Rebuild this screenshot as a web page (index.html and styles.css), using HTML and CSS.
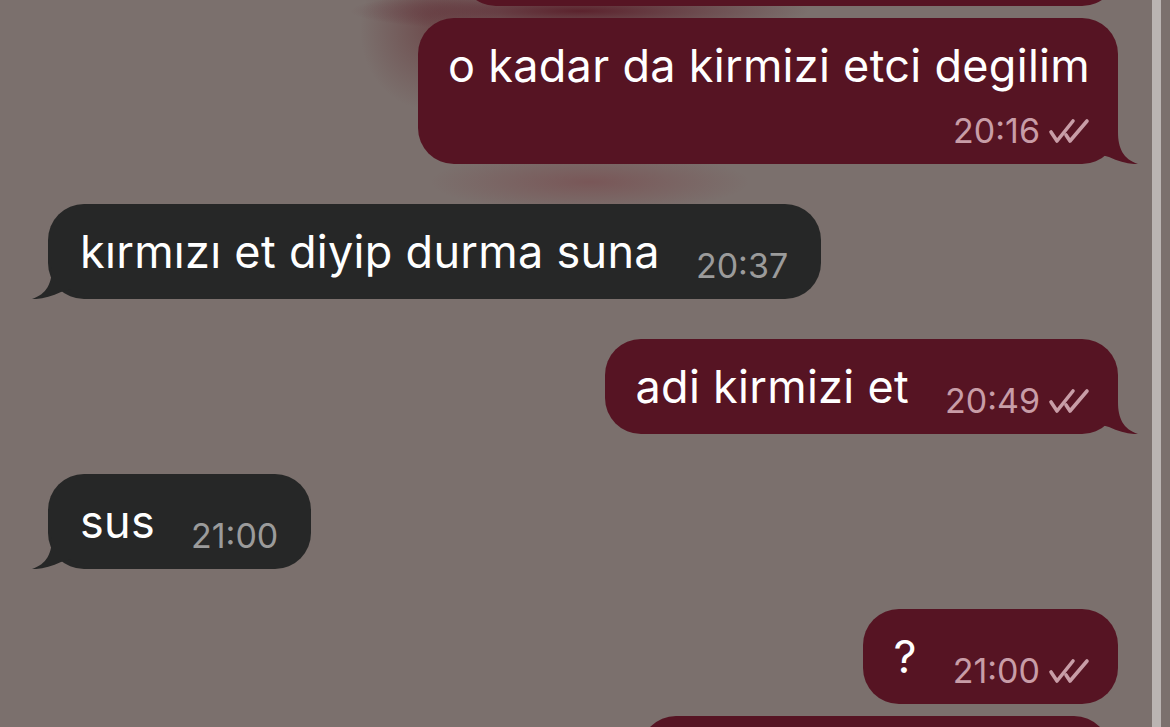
FILE: index.html
```html
<!DOCTYPE html>
<html lang="tr">
<head>
<meta charset="utf-8">
<title>Sohbet</title>
<link rel="stylesheet" href="styles.css">
</head>
<body>
<svg width="0" height="0" class="defs" aria-hidden="true">
  <defs>
    <symbol id="tail" viewBox="0 0 40 36">
      <path d="M0 0 H20 V4 C20 20 25 31 40 36 C31 36.5 21 33.5 11 29 L0 26 Z"/>
    </symbol>
    <symbol id="ticks" viewBox="0 0 42 26">
      <path d="M3 14 L9 23 L25 3" />
      <path d="M18 17 L22 23 L39 3" />
    </symbol>
  </defs>
</svg>

<div class="screen">
  <main class="chat">
    <div class="row out">
      <div class="bubble sent clipped"></div>
    </div>

    <div class="row out grouped">
      <div class="bubble sent stacked">
        <span class="text">o kadar da kirmizi etci degilim</span>
        <span class="meta">20:16<svg class="ticks"><use href="#ticks"/></svg></span>
        <svg class="tail"><use href="#tail"/></svg>
      </div>
    </div>

    <div class="row in">
      <div class="bubble received">
        <span class="text">kırmızı et diyip durma suna</span>
        <span class="meta">20:37</span>
        <svg class="tail"><use href="#tail"/></svg>
      </div>
    </div>

    <div class="row out">
      <div class="bubble sent">
        <span class="text">adi kirmizi et</span>
        <span class="meta">20:49<svg class="ticks"><use href="#ticks"/></svg></span>
        <svg class="tail"><use href="#tail"/></svg>
      </div>
    </div>

    <div class="row in">
      <div class="bubble received">
        <span class="text">sus</span>
        <span class="meta">21:00</span>
        <svg class="tail"><use href="#tail"/></svg>
      </div>
    </div>

    <div class="row out">
      <div class="bubble sent">
        <span class="text">?</span>
        <span class="meta">21:00<svg class="ticks"><use href="#ticks"/></svg></span>
      </div>
    </div>

    <div class="row out grouped">
      <div class="bubble sent next"></div>
    </div>
  </main>
  <div class="scroll-track"></div>
  <div class="edge"></div>
</div>
</body>
</html>
```

FILE: styles.css
```css
* { box-sizing: border-box; }

html, body {
  margin: 0;
  height: 100%;
}

body {
  overflow: hidden;
  font-family: Inter, "Noto Sans", "DejaVu Sans", sans-serif;
  background-color: #7b706d;
  /* soft red haze that spills from the wallpaper behind the top messages */
  background-image:
    radial-gradient(ellipse 160px 30px at 590px 182px, rgba(118, 52, 58, 0.42), rgba(118, 52, 58, 0) 100%),
    radial-gradient(ellipse 230px 22px at 580px 11px, rgba(88, 26, 38, 0.9), rgba(88, 26, 38, 0) 100%),
    radial-gradient(ellipse 70px 80px at 430px 30px, rgba(100, 50, 54, 0.55), rgba(100, 50, 54, 0) 100%);
}

.defs { position: absolute; }

.screen {
  display: grid;
  grid-template-columns: 1152px 9px 1fr;
  height: 727px;
}

.scroll-track { background: #bab4b2; }

.chat {
  display: flex;
  flex-direction: column;
  gap: 40px;
  margin-top: -89px;
}

.row { display: flex; }
.row.grouped { margin-top: -28px; }
.row.out { justify-content: flex-end; padding-right: 34px; }
.row.in { justify-content: flex-start; padding-left: 48px; }

.bubble {
  position: relative;
  display: flex;
  align-items: flex-end;
  gap: 36px;
  max-width: 820px;
  padding: 21px 28px 20px 30px;
  border-radius: 36px;
  color: #fff;
  font-size: 45px;
  line-height: 54px;
  letter-spacing: 0.3px;
}

.bubble.sent { background: #561423; }
.bubble.received { background: #262727; padding-left: 32px; padding-right: 33px; }

.bubble.clipped { width: 658px; height: 95px; }
.bubble.next { width: 470px; height: 95px; margin-right: 8px; }

.bubble.stacked {
  flex-direction: column;
  align-items: stretch;
  gap: 0;
  padding-bottom: 15px;
}
.bubble.stacked .meta { align-self: flex-end; margin: 20px 0 0; }

.meta {
  display: flex;
  align-items: center;
  gap: 8px;
  flex-shrink: 0;
  font-size: 34px;
  line-height: 36px;
  letter-spacing: 0;
  margin-bottom: -5px;
  white-space: nowrap;
}

.sent .meta { color: #c89da7; }
.received .meta { color: #9b9b9b; }

.ticks {
  width: 42px;
  height: 26px;
  fill: none;
  stroke: #c89da7;
  stroke-width: 3.6;
  stroke-linecap: round;
  stroke-linejoin: round;
}

.tail {
  position: absolute;
  bottom: 0;
  width: 40px;
  height: 36px;
}
.sent .tail { right: -20px; fill: #561423; }
.received .tail { left: -16px; fill: #262727; transform: scaleX(-1); }
```
